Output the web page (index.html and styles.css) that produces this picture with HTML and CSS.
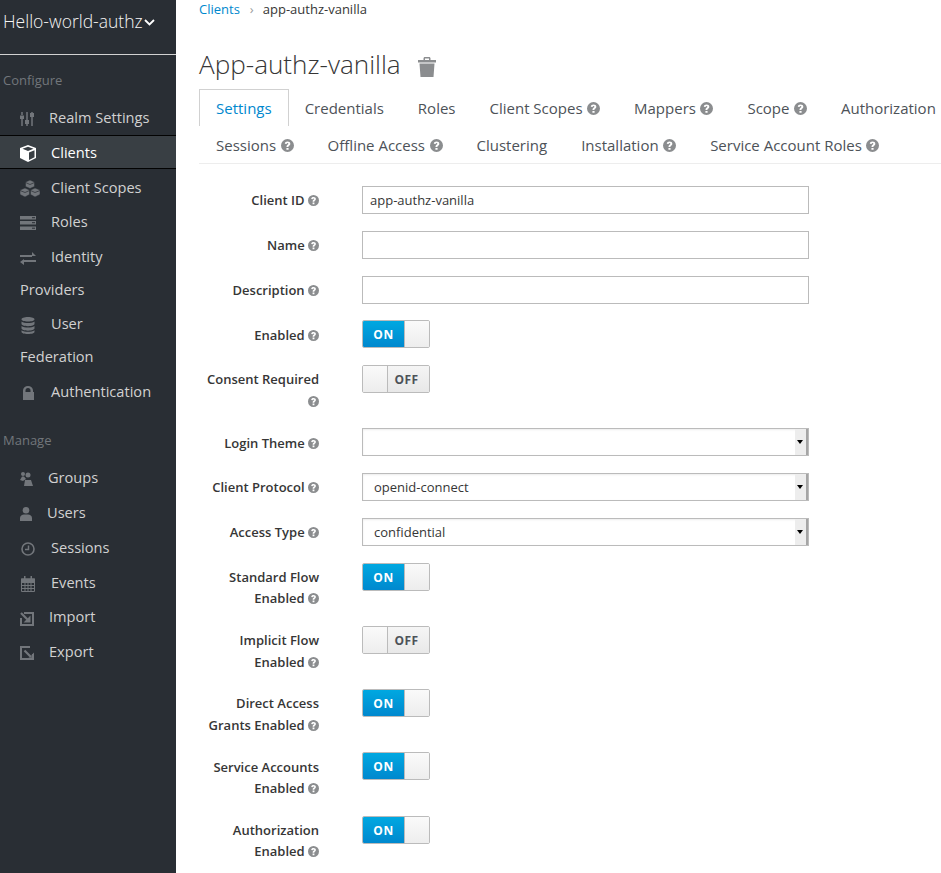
FILE: index.html
```html
<!DOCTYPE html>
<html lang="en">
<head>
    <meta charset="UTF-8">
    <title>App-authz-vanilla</title>
    <link rel="stylesheet" href="styles.css">
</head>
<body>
    <svg class="defs" width="0" height="0">
        <symbol id="help" viewBox="0 0 12 12">
            <path fill-rule="evenodd" d="M6 0a6 6 0 1 0 0 12A6 6 0 0 0 6 0zM5 8.200h2V10H5zM3.500 4.400C3.600 2.900 4.600 2.200 6 2.200c1.500 0 2.600.8 2.600 2.100 0 1-.6 1.500-1.200 1.900-.4.300-.5.500-.5 1.200H5.100c0-1.100.2-1.600.9-2.100.5-.4.800-.6.800-1 0-.4-.3-.6-.8-.6-.5 0-.8.300-.8.800z"/>
        </symbol>
    </svg>

    <div id="sidebar">
        <div class="realm">Hello-world-authz<svg class="chevron" width="11" height="7" viewBox="0 0 11 7"><path d="M1 1l4.500 4.500L10 1" fill="none" stroke="#fff" stroke-width="1.800"/></svg></div>

        <h2 class="nav-title first">Configure</h2>
        <ul class="nav">
            <li><svg width="29" height="16" viewBox="0 0 29 16"><path d="M2 1v3M2 8v7M7 1v8M7 13v2M12 1v1M12 6v9" stroke="#72767b" stroke-width="1.500"/><path d="M0 4.500h4v3.500H0zM5 9h4v4H5zM10 2h4v4h-4z" fill="#72767b"/></svg><span>Realm Settings</span></li>
            <li class="active"><svg width="31" height="17" viewBox="0 0 31 17"><path d="M8 0l8 3v10l-8 4-8-4V3zM8 1.700L2.500 3.800 8 6l5.500-2.200zM9 7.500v7.500l5.500-2.700v-7z" fill="#fff" fill-rule="evenodd"/></svg><span>Clients</span></li>
            <li><svg width="31" height="17" viewBox="0 0 31 17"><path d="M10 0l4.500 2v4.500L10 8.500 5.500 6.500V2zM5 8l4.500 2v4.500L5 17 0 14.500V10zM15 8l5 2v4.500L15 17l-4.500-2.500V10z" fill="#72767b" stroke="#292e34" stroke-width=".5"/><path d="M5.500 2.500L10 4.500l4.500-2M0 10.500l5 2 4.500-2M10.500 10.500l4.500 2 5-2" fill="none" stroke="#292e34" stroke-width=".7"/></svg><span>Client Scopes</span></li>
            <li><svg width="31" height="14" viewBox="0 0 31 14"><path d="M0 0h16v3.500H0zM0 5h16v3.500H0zM0 10.500h16V14H0z" fill="#72767b"/><path d="M12 1.700h3M12 6.700h3M12 12.200h3" stroke="#292e34"/></svg><span>Roles</span></li>
            <li><svg width="31" height="13" viewBox="0 0 31 13"><path d="M0 3h12V0l4 4-4 0v1H0zM16 8H4V7L0 10l4 3v-3h12z" fill="#72767b"/></svg><span>Identity Providers</span></li>
            <li><svg width="31" height="17" viewBox="0 0 31 17"><path d="M8 0c4 0 6.500 1 6.500 2.300S12 4.600 8 4.600 1.500 3.600 1.500 2.300 4 0 8 0zM1.500 4.500C3 5.700 5.500 6 8 6s5-.3 6.500-1.500v2.300C14.500 8 12 9.200 8 9.200S1.500 8 1.500 6.800zM1.500 9C3 10.300 5.500 10.600 8 10.600S13 10.300 14.500 9v2.300c0 1.200-2.500 2.400-6.500 2.400s-6.500-1.200-6.500-2.400zM1.500 13.300C3 14.500 5.500 14.800 8 14.800s5-.3 6.500-1.500v1.400C14.500 16 12 17 8 17s-6.500-1-6.500-2.300z" fill="#72767b"/></svg><span>User Federation</span></li>
            <li><svg width="31" height="14" viewBox="0 0 31 14"><path d="M3 6V4.500a5 4.500 0 0 1 10 0V6h1v8H3zM5.500 6h5V4.500a2.500 2.500 0 0 0-5 0z" fill="#72767b" fill-rule="evenodd"/></svg><span>Authentication</span></li>
        </ul>

        <h2 class="nav-title">Manage</h2>
        <ul class="nav">
            <li><svg width="28" height="14" viewBox="0 0 28 14"><circle cx="8" cy="3" r="2.500" fill="#72767b"/><circle cx="3" cy="2" r="2" fill="#72767b"/><path d="M0 8l2-3.500h2L6 7 3 9zM4 14l1-6h6l2 6z" fill="#72767b"/></svg><span>Groups</span></li>
            <li><svg width="27" height="14" viewBox="0 0 27 14"><circle cx="6" cy="3.300" r="3.300" fill="#72767b"/><path d="M0 14v-3c0-2 2-3.500 4-3.500h4c2 0 4 1.500 4 3.500v3z" fill="#72767b"/></svg><span>Users</span></li>
            <li><svg width="31" height="14" viewBox="0 0 31 14"><circle cx="8" cy="7" r="6" fill="none" stroke="#72767b" stroke-width="1.600"/><path d="M8.500 3.500v4H5" fill="none" stroke="#72767b" stroke-width="1.500"/></svg><span>Sessions</span></li>
            <li><svg width="31" height="16" viewBox="0 0 31 16"><path d="M1.500 3h13v12.500h-13zM1.500 6.500h13M1.500 9.500h13M1.500 12.500h13M5 6.500v9M8 6.500v9M11 6.500v9" fill="none" stroke="#72767b"/><path d="M1 2.500h14v4H1zM4 0h1.500v3H4zM10.500 0H12v3h-1.500z" fill="#72767b"/></svg><span>Events</span></li>
            <li><svg width="29" height="14" viewBox="0 0 29 14"><path d="M4 1h9v12H1V6" fill="none" stroke="#72767b" stroke-width="2"/><path d="M1 1l7 7" stroke="#72767b" stroke-width="2.200"/><path d="M10.500 3.500v7h-7l2.500-2.500h2V6z" fill="#72767b"/></svg><span>Import</span></li>
            <li><svg width="29" height="14" viewBox="0 0 29 14"><path d="M13 8v5H1V1h9" fill="none" stroke="#72767b" stroke-width="2"/><path d="M4.500 4.500L11 11" stroke="#72767b" stroke-width="2.200"/><path d="M14 6.500V14H6.500L9 11.500h2.500V9z" fill="#72767b"/></svg><span>Export</span></li>
        </ul>
    </div>

    <div id="main">
        <ol class="breadcrumb">
            <li><a href="#">Clients</a></li>
            <li class="sep">›</li>
            <li>app-authz-vanilla</li>
        </ol>

        <h1 class="title">App-authz-vanilla <svg class="trash" width="18" height="20" viewBox="0 0 18 20"><path d="M0 3h5.500V1.500C5.500.6 6 0 7 0h4c1 0 1.500.6 1.500 1.500V3H18v2.500H0zM7 1.500V3h4V1.500zM1.500 6.500h15L15.500 20h-13z" fill="#8b8d8f" fill-rule="evenodd"/></svg></h1>

        <ul class="tabs">
            <li class="active">Settings</li>
            <li>Credentials</li>
            <li>Roles</li>
            <li>Client Scopes <svg class="help-tab"><use href="#help"/></svg></li>
            <li>Mappers <svg class="help-tab"><use href="#help"/></svg></li>
            <li>Scope <svg class="help-tab"><use href="#help"/></svg></li>
            <li>Authorization</li>
            <li>Sessions <svg class="help-tab"><use href="#help"/></svg></li>
            <li>Offline Access <svg class="help-tab"><use href="#help"/></svg></li>
            <li>Clustering</li>
            <li>Installation <svg class="help-tab"><use href="#help"/></svg></li>
            <li>Service Account Roles <svg class="help-tab"><use href="#help"/></svg></li>
        </ul>

        <form class="form">
            <div class="row">
                <label>Client ID <svg class="help"><use href="#help"/></svg></label>
                <input class="field" type="text" value="app-authz-vanilla">
            </div>
            <div class="row">
                <label>Name <svg class="help"><use href="#help"/></svg></label>
                <input class="field" type="text">
            </div>
            <div class="row">
                <label>Description <svg class="help"><use href="#help"/></svg></label>
                <input class="field" type="text">
            </div>
            <div class="row">
                <label>Enabled <svg class="help"><use href="#help"/></svg></label>
                <div class="toggle on"><b>ON</b><i></i></div>
            </div>
            <div class="row">
                <label>Consent Required <svg class="help"><use href="#help"/></svg></label>
                <div class="toggle off"><i></i><b>OFF</b></div>
            </div>
            <div class="row">
                <label>Login Theme <svg class="help"><use href="#help"/></svg></label>
                <div class="field select"><span></span><i></i></div>
            </div>
            <div class="row">
                <label>Client Protocol <svg class="help"><use href="#help"/></svg></label>
                <div class="field select"><span>openid-connect</span><i></i></div>
            </div>
            <div class="row">
                <label>Access Type <svg class="help"><use href="#help"/></svg></label>
                <div class="field select"><span>confidential</span><i></i></div>
            </div>
            <div class="row">
                <label>Standard Flow Enabled <svg class="help"><use href="#help"/></svg></label>
                <div class="toggle on"><b>ON</b><i></i></div>
            </div>
            <div class="row">
                <label>Implicit Flow Enabled <svg class="help"><use href="#help"/></svg></label>
                <div class="toggle off"><i></i><b>OFF</b></div>
            </div>
            <div class="row">
                <label>Direct Access Grants Enabled <svg class="help"><use href="#help"/></svg></label>
                <div class="toggle on"><b>ON</b><i></i></div>
            </div>
            <div class="row">
                <label>Service Accounts Enabled <svg class="help"><use href="#help"/></svg></label>
                <div class="toggle on"><b>ON</b><i></i></div>
            </div>
            <div class="row">
                <label>Authorization Enabled <svg class="help"><use href="#help"/></svg></label>
                <div class="toggle on"><b>ON</b><i></i></div>
            </div>
        </form>
    </div>
</body>
</html>
```

FILE: styles.css
```css
html, body {
    height: 100%;
}

body {
    margin: 0;
    display: flex;
    overflow: hidden;
    background-color: #fff;
    font-family: "Open Sans", sans-serif;
    font-size: 13px;
    color: #363636;
}

.defs {
    position: absolute;
}

#sidebar {
    flex: 0 0 176px;
    height: 100%;
    background-color: #292e34;
    color: #d1d1d1;
}

.realm {
    height: 55px;
    padding: 9px 0 0 3px;
    box-sizing: border-box;
    border-bottom: 1px solid #d1d1d1;
    font-size: 17.500px;
    font-weight: 300;
    line-height: 24px;
    color: #f5f5f5;
    white-space: nowrap;
}

.chevron {
    margin-left: 1px;
    vertical-align: 2px;
}

.nav-title {
    margin: 24px 0 0;
    padding-left: 3px;
    font-size: 13px;
    font-weight: 400;
    line-height: 18px;
    color: #72767b;
}

.nav-title.first {
    margin-top: 16px;
}

.nav {
    list-style: none;
    margin: 12px 0 0;
    padding: 0;
}

.nav li {
    padding: 0 20px;
    margin-bottom: 2.300px;
    font-size: 14.600px;
    line-height: 32.500px;
}

.nav li svg {
    vertical-align: middle;
}

.nav li.active {
    background-color: #393f44;
    color: #fff;
    box-shadow: 0 -1px 0 #030303, 0 1px 0 #030303;
}

#main {
    flex: 1;
    min-width: 0;
    padding-left: 23px;
    overflow: hidden;
}

.breadcrumb {
    display: flex;
    list-style: none;
    margin: 0;
    padding: 0;
    line-height: 18px;
}

.breadcrumb a {
    color: #0088ce;
    text-decoration: none;
}

.breadcrumb .sep {
    margin: 0 9px 0 10px;
    color: #9c9c9c;
}

.title {
    margin: 28px 0 0;
    font-size: 26.100px;
    font-weight: 300;
    line-height: 36px;
}

.trash {
    margin-left: 11px;
    vertical-align: -3px;
}

.tabs {
    display: flex;
    flex-wrap: wrap;
    list-style: none;
    margin: 7px -30px 0 0;
    padding: 0;
    border-bottom: 1px solid #ededed;
    font-size: 15px;
    line-height: 36px;
    color: #4d5258;
}

.tabs li {
    padding: 0 16px;
    border: 1px solid transparent;
    border-bottom: 0;
    white-space: nowrap;
}

.tabs li.active {
    border-color: #d1d1d1;
    color: #0088ce;
    margin-right: -1px;
}

.help-tab {
    width: 13px;
    height: 13px;
    margin-left: 0.6px;
    fill: #8b8d8f;
    vertical-align: -1px;
}

.form {
    margin-top: 22.100px;
}

.row {
    display: flex;
    margin-bottom: 16.750px;
}

.row label {
    flex: 0 0 120px;
    margin-right: 43px;
    margin-bottom: -0.7px;
    padding-top: 4.200px;
    font-weight: 600;
    line-height: 21.500px;
    text-align: right;
}

.help {
    width: 11px;
    height: 11px;
    fill: #8b8d8f;
    vertical-align: -1px;
}

.field {
    width: 447px;
    height: 28px;
    box-sizing: border-box;
    margin: 0;
    padding: 0 7px;
    border: 1px solid #bbb;
    background-color: #fff;
    font-family: inherit;
    font-size: 13px;
    color: #363636;
}

.select {
    display: flex;
    justify-content: space-between;
    padding: 0 0 0 11px;
    line-height: 26px;
    box-shadow: inset 0 1px 2px rgba(0, 0, 0, 0.08);
}

.select i {
    position: relative;
    width: 11px;
    background-color: #ededed;
    border-right: 2px solid #a5a5a5;
}

.select i::after {
    content: "";
    position: absolute;
    top: 11px;
    left: 2px;
    border: 3px solid transparent;
    border-top: 4px solid #000;
    border-bottom: 0;
}

.toggle {
    display: flex;
    width: 68px;
    height: 28px;
    box-sizing: border-box;
    border: 1px solid #bbb;
    border-radius: 2px;
    overflow: hidden;
}

.toggle b {
    flex: 1;
    font-size: 12px;
    letter-spacing: 0.5px;
    line-height: 27px;
    text-align: center;
}

.toggle i {
    flex: 0 0 24px;
    background-image: linear-gradient(#fafafa, #ededed);
}

.toggle.on b {
    background-image: linear-gradient(#00a8e1, #0088ce);
    color: #fff;
}

.toggle.on i {
    border-left: 1px solid #bbb;
}

.toggle.off b {
    padding-right: 4px;
    background-image: linear-gradient(#f5f5f5, #e8e8e8);
    color: #4d5258;
}

.toggle.off i {
    border-right: 1px solid #bbb;
}
```
